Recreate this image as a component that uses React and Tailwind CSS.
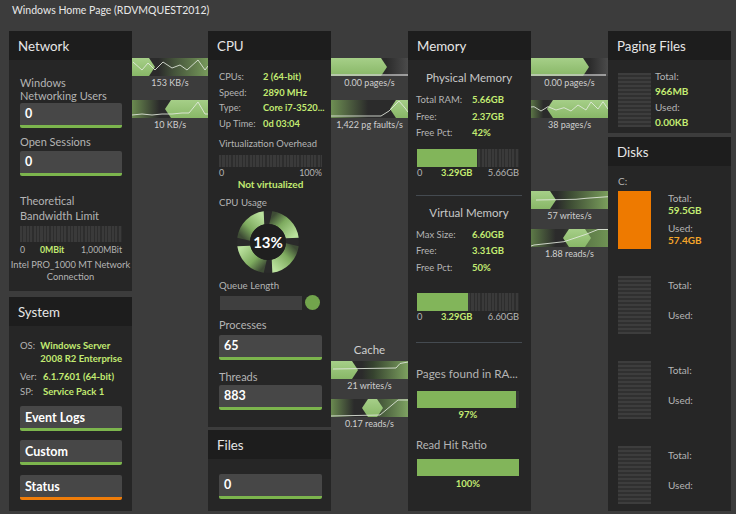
import React from "react";

const stripesV =
  "bg-[image:repeating-linear-gradient(90deg,#3a3a3a_0px,#3a3a3a_2.2px,#2d2d2d_2.2px,#2d2d2d_3.4px)]";
const stripesH =
  "bg-[image:repeating-linear-gradient(180deg,#3d3d3d_0px,#3d3d3d_2.5px,#303030_2.5px,#303030_4px)]";

function Panel({ title, className, children }) {
  return (
    <div className={"flex flex-col bg-[#262626] " + className}>
      <div className="h-[29px] shrink-0 bg-[#1d1d1d] flex items-center pl-[9px] pt-[3px] text-[13.3px] text-[#e6e6e6]">
        {title}
      </div>
      <div className="flex-1 flex flex-col">{children}</div>
    </div>
  );
}

function ValBox({ children, className = "", orange = false }) {
  return (
    <div
      className={
        "h-[25px] shrink-0 rounded-[2px] bg-[#474747] border-b-[3px] flex items-center pl-[5px] text-white font-bold text-[12.5px] " +
        (orange ? "border-[#ef7d0a] " : "border-[#7cb54d] ") +
        className
      }
    >
      {children}
    </div>
  );
}

function hexPts(x1, x2, h, tipL, tipR) {
  const t = 6;
  const m = h / 2;
  const p = [];
  p.push(tipL ? [x1 + t, 0] : [x1, 0]);
  p.push(tipR ? [x2 - t, 0] : [x2, 0]);
  if (tipR) p.push([x2, m]);
  p.push(tipR ? [x2 - t, h] : [x2, h]);
  p.push(tipL ? [x1 + t, h] : [x1, h]);
  if (tipL) p.push([x1, m]);
  return p.map((q) => q.join(",")).join(" ");
}

function Flow({ id, w, h = 18, stops, hex, spark, sparkColor = "#e4eadf", sparkW = 1 }) {
  return (
    <svg width={w} height={h} className="block">
      <defs>
        <linearGradient id={id + "b"} x1="0" x2="1" y1="0" y2="0">
          {stops.map(([o, c], i) => (
            <stop key={i} offset={o} stopColor={c} />
          ))}
        </linearGradient>
        <linearGradient id={id + "h"} x1="0" x2="0" y1="0" y2="1">
          <stop offset="0" stopColor="#a6cf88" />
          <stop offset="1" stopColor="#88b767" />
        </linearGradient>
      </defs>
      <rect width={w} height={h} fill={`url(#${id}b)`} />
      <polygon points={hexPts(hex[0], hex[1], h, hex[2], hex[3])} fill={`url(#${id}h)`} />
      <polyline points={spark} fill="none" stroke={sparkColor} strokeWidth={sparkW} opacity="0.85" />
    </svg>
  );
}

function FlowLabel({ children }) {
  return <div className="text-center text-[9px] leading-[14px] text-[#cfcfcf] whitespace-nowrap">{children}</div>;
}

function Donut() {
  const c = 31;
  const R = 31;
  const r = 18;
  const segs = [
    [8, 82],
    [98, 172],
    [188, 262],
    [278, 352],
  ];
  const pt = (a, rad) => [c + rad * Math.sin((a * Math.PI) / 180), c - rad * Math.cos((a * Math.PI) / 180)];
  return (
    <svg width="62" height="62" className="block">
      <defs>
        {segs.map(([a, b], i) => {
          const s = pt(a, 24.5);
          const e = pt(b, 24.5);
          return (
            <linearGradient key={i} id={"dg" + i} gradientUnits="userSpaceOnUse" x1={s[0]} y1={s[1]} x2={e[0]} y2={e[1]}>
              <stop offset="0" stopColor="#3e4c35" />
              <stop offset="0.4" stopColor="#7eab5f" />
              <stop offset="1" stopColor="#bbe29e" />
            </linearGradient>
          );
        })}
      </defs>
      <circle cx={c} cy={c} r={R} fill="#2a2a2a" />
      {segs.map(([a, b], i) => {
        const o1 = pt(a, R);
        const o2 = pt(b, R);
        const i2 = pt(b - 4, r);
        const i1 = pt(a - 4, r);
        const d = `M${o1[0]},${o1[1]} A${R},${R} 0 0 1 ${o2[0]},${o2[1]} L${i2[0]},${i2[1]} A${r},${r} 0 0 0 ${i1[0]},${i1[1]} Z`;
        return <path key={i} d={d} fill={`url(#dg${i})`} />;
      })}
      <circle cx={c} cy={c} r={r} fill="#1f1f1f" />
      <text x={c} y={c + 5.5} textAnchor="middle" fill="#ffffff" fontSize="15" fontWeight="700" fontFamily="Lato, 'Open Sans', sans-serif">
        13%
      </text>
    </svg>
  );
}

const G = "text-[#c3eb72] font-bold whitespace-nowrap";

function DiskUnit({ name, total, used, filled, className = "" }) {
  return (
    <div className={"flex flex-col " + className}>
      <div className="h-[12px] leading-[12px] text-[10px] pl-[10px] text-[#b4b4b4]">{name}</div>
      <div className="flex mt-[4px]">
        <div className={"ml-[10px] w-[33px] h-[58px] " + (filled ? "bg-[#ee7a00] h-[56px]" : stripesH)} />
        {filled ? (
          <div className="ml-[17px] text-[10px] leading-[12px] flex flex-col">
            <div className="mt-[1px]">Total:</div>
            <div className={G}>{total}</div>
            <div className="mt-[6px]">Used:</div>
            <div className="text-[#f4a52a] font-bold">{used}</div>
          </div>
        ) : (
          <div className="ml-[17px] text-[10px] leading-[12px] flex flex-col">
            <div className="mt-[3px]">Total:</div>
            <div className="mt-[18px]">Used:</div>
          </div>
        )}
      </div>
    </div>
  );
}

export default function App() {
  return (
    <div className="w-[736px] h-[514px] overflow-hidden bg-[#3c3c3c] font-['Lato','Open_Sans',sans-serif] text-[#b4b4b4]">
      <div className="h-[31px] pl-[12px] pt-[2px] text-[10.5px] leading-[16px] text-[#e8e8e8]">
        Windows Home Page (RDVMQUEST2012)
      </div>
      <div className="flex pl-[9px] h-[480px]">
        {/* Column 1 */}
        <div className="w-[123px] flex flex-col shrink-0">
          <Panel title="Network" className="h-[260px]">
            <div className="pt-[16px] pl-[11px] pr-[10px] flex flex-col">
              <div className="text-[11px] leading-[13px] whitespace-nowrap">
                Windows
                <br />
                Networking Users
              </div>
              <ValBox className="mt-[1px]">0</ValBox>
              <div className="mt-[7px] text-[11px] leading-[13px]">Open Sessions</div>
              <ValBox className="mt-[3px]">0</ValBox>
              <div className="mt-[17px] text-[11px] leading-[15px]">
                Theoretical
                <br />
                Bandwidth Limit
              </div>
              <div className={"mt-[3px] h-[16px] " + stripesV} />
              <div className="mt-[2px] flex text-[8.7px] leading-[12px]">
                <div className="w-[20px]">0</div>
                <div className={"flex-1 " + G}>0MBit</div>
                <div>1,000MBit</div>
              </div>
              <div className="mt-[3px] -ml-[11px] -mr-[10px] text-center text-[9.3px] leading-[12px] whitespace-nowrap">
                Intel PRO_1000 MT Network
                <br />
                Connection
              </div>
            </div>
          </Panel>
          <Panel title="System" className="mt-[6px] flex-1">
            <div className="pt-[13px] pl-[11px] pr-[10px] flex flex-col text-[9.5px] leading-[13px]">
              <div className="flex">
                <div className="w-[23px]">OS:</div>
                <div className={G}>
                  Windows Server
                  <br />
                  2008 R2 Enterprise
                </div>
              </div>
              <div className="flex mt-[5px]">
                <div className="w-[23px]">Ver:</div>
                <div className={G}>6.1.7601 (64-bit)</div>
              </div>
              <div className="flex mt-[2px]">
                <div className="w-[23px]">SP:</div>
                <div className={G}>Service Pack 1</div>
              </div>
              <ValBox className="mt-[8px]">Event Logs</ValBox>
              <ValBox className="mt-[9px]">Custom</ValBox>
              <ValBox className="mt-[10px]" orange>
                Status
              </ValBox>
            </div>
          </Panel>
        </div>

        {/* Gap 1 */}
        <div className="w-[76px] shrink-0 flex flex-col pt-[27px]">
          <Flow
            id="f1"
            w={76}
            stops={[
              [0, "#2b2b2b"],
              [0.35, "#2b2b2b"],
              [0.55, "#44523a"],
              [1, "#779a5b"],
            ]}
            hex={[0, 23, false, true]}
            spark="1,4 10,12 16,5 23,12 31,4 40,10 48,7 55,12 66,2 73,12 76,8"
          />
          <FlowLabel>153 KB/s</FlowLabel>
          <div className="mt-[10px]">
            <Flow
              id="f2"
              w={76}
              stops={[
                [0, "#6b8b50"],
                [0.36, "#2b2b2b"],
                [0.5, "#2b2b2b"],
                [1, "#2b2b2b"],
              ]}
              hex={[33, 76, true, false]}
              spark="0,15 10,14 20,15 30,14 40,14 50,13 57,13 66,2 73,14 76,14"
            />
          </div>
          <FlowLabel>10 KB/s</FlowLabel>
        </div>

        {/* Column 2 */}
        <div className="w-[123px] flex flex-col shrink-0">
          <Panel title="CPU" className="h-[396px]">
            <div className="pt-[9px] pl-[11px] pr-[9px] flex flex-col">
              <div className="text-[9.3px] leading-[15.5px]">
                {[
                  ["CPUs:", "2 (64-bit)"],
                  ["Speed:", "2890 MHz"],
                  ["Type:", "Core i7-3520..."],
                  ["Up Time:", "0d 03:04"],
                ].map(([l, v]) => (
                  <div key={l} className="flex">
                    <div className="w-[44px] shrink-0">{l}</div>
                    <div className={G}>{v}</div>
                  </div>
                ))}
              </div>
              <div className="mt-[6px] text-[9.4px] leading-[14px] whitespace-nowrap">Virtualization Overhead</div>
              <div className={"mt-[4px] h-[12px] w-[103px] " + stripesV} />
              <div className="flex justify-between w-[103px] text-[9px] leading-[11px]">
                <span>0</span>
                <span>100%</span>
              </div>
              <div className={"w-[103px] text-center text-[10px] leading-[12px] " + G}>Not virtualized</div>
              <div className="mt-[5px] text-[9.7px] leading-[14px]">CPU Usage</div>
              <div className="mt-[2px] ml-[18px]">
                <Donut />
              </div>
              <div className="mt-[5px] text-[9.7px] leading-[14px]">Queue Length</div>
              <div className="mt-[3px] h-[15px] flex items-center">
                <div className="ml-[1px] w-[82px] h-[14px] bg-[#3f3f3f]" />
                <div className="ml-[3px] w-[15px] h-[15px] rounded-full bg-[#72a44c]" />
              </div>
              <div className="mt-[6px] text-[11px] leading-[17px]">Processes</div>
              <ValBox className="mt-[2px]">65</ValBox>
              <div className="mt-[8px] text-[11px] leading-[17px]">Threads</div>
              <ValBox>883</ValBox>
            </div>
          </Panel>
          <Panel title="Files" className="mt-[3px] flex-1">
            <div className="pt-[15px] pl-[11px] pr-[9px] flex flex-col">
              <ValBox>0</ValBox>
            </div>
          </Panel>
        </div>

        {/* Gap 2 */}
        <div className="w-[77px] shrink-0 flex flex-col pt-[27px]">
          <Flow
            id="f3"
            w={77}
            stops={[
              [0, "#2b2b2b"],
              [0.72, "#2b2b2b"],
              [1, "#4b4b4b"],
            ]}
            hex={[0, 56, false, true]}
            spark="0,17 77,17"
            sparkColor="#cfcfcf"
            sparkW={1.5}
          />
          <FlowLabel>0.00 pages/s</FlowLabel>
          <div className="mt-[10px]">
            <Flow
              id="f4"
              w={77}
              stops={[
                [0, "#6e8f53"],
                [0.48, "#2b2b2b"],
                [1, "#2b2b2b"],
              ]}
              hex={[59, 77, true, false]}
              spark="0,16 50,16 58,11 68,1 74,8 77,12"
            />
          </div>
          <FlowLabel>1,422 pg faults/s</FlowLabel>
          <div className="mt-[210px] text-center text-[11.5px] leading-[16px] text-[#cfcfcf]">Cache</div>
          <div className="mt-[3px]">
            <Flow
              id="f9"
              w={77}
              stops={[
                [0, "#2b2b2b"],
                [0.4, "#2b2b2b"],
                [0.55, "#36432f"],
                [1, "#7ca05f"],
              ]}
              hex={[0, 27, false, true]}
              spark="2,8 65,7 69,2.5 77,1"
            />
          </div>
          <FlowLabel>21 writes/s</FlowLabel>
          <div className="mt-[6px]">
            <Flow
              id="f10"
              w={77}
              stops={[
                [0, "#6a8a50"],
                [0.3, "#2b2b2b"],
                [0.42, "#2b2b2b"],
                [0.7, "#4e6440"],
                [1, "#7ea262"],
              ]}
              hex={[31, 52, true, true]}
              spark="0,17 49,16 67,1 77,1"
            />
          </div>
          <FlowLabel>0.17 reads/s</FlowLabel>
        </div>

        {/* Column 3 */}
        <div className="w-[123px] flex flex-col shrink-0">
          <Panel title="Memory" className="h-[480px]">
            <div className="pt-[10px] pl-[8px] pr-[9px] flex flex-col">
              <div className="text-center text-[11.5px] leading-[16px] text-[#c8c8c8]">Physical Memory</div>
              <div className="mt-[6px] text-[9.5px] leading-[16.5px]">
                {[
                  ["Total RAM:", "5.66GB"],
                  ["Free:", "2.37GB"],
                  ["Free Pct:", "42%"],
                ].map(([l, v]) => (
                  <div key={l} className="flex">
                    <div className="w-[56px]">{l}</div>
                    <div className={G}>{v}</div>
                  </div>
                ))}
              </div>
              <div className={"mt-[7px] ml-[1px] w-[102px] h-[18px] flex " + stripesV}>
                <div className="w-[60px] h-full bg-[#82b55a]" />
              </div>
              <div className="ml-[1px] w-[102px] flex text-[9.3px] leading-[12px]">
                <div className="w-[24px]">0</div>
                <div className={"flex-1 " + G}>3.29GB</div>
                <div>5.66GB</div>
              </div>
              <div className="mt-[16px] h-[1px] w-[106px] bg-[#444a50]" />
              <div className="mt-[9px] text-center text-[11.5px] leading-[16px] text-[#c8c8c8]">Virtual Memory</div>
              <div className="mt-[6px] text-[9.5px] leading-[16.5px]">
                {[
                  ["Max Size:", "6.60GB"],
                  ["Free:", "3.31GB"],
                  ["Free Pct:", "50%"],
                ].map(([l, v]) => (
                  <div key={l} className="flex">
                    <div className="w-[56px]">{l}</div>
                    <div className={G}>{v}</div>
                  </div>
                ))}
              </div>
              <div className={"mt-[17px] ml-[1px] w-[102px] h-[18px] flex " + stripesV}>
                <div className="w-[51px] h-full bg-[#82b55a]" />
              </div>
              <div className="ml-[1px] w-[102px] flex text-[9.3px] leading-[12px]">
                <div className="w-[24px]">0</div>
                <div className={"flex-1 " + G}>3.29GB</div>
                <div>6.60GB</div>
              </div>
              <div className="mt-[19px] h-[1px] w-[106px] bg-[#444a50]" />
              <div className="mt-[22px] text-[11.7px] leading-[16px] whitespace-nowrap">Pages found in RA...</div>
              <div className="mt-[10px] ml-[1px] w-[102px] h-[17px] flex bg-[#333]">
                <div className="w-[99px] h-full bg-[#82b55a]" />
              </div>
              <div className={"mt-[1px] w-[104px] text-center text-[9.5px] leading-[12px] " + G}>97%</div>
              <div className="mt-[16px] text-[11.2px] leading-[16px]">Read Hit Ratio</div>
              <div className="mt-[6px] ml-[1px] w-[102px] h-[17px] bg-[#82b55a]" />
              <div className={"mt-[2px] w-[104px] text-center text-[9.5px] leading-[12px] " + G}>100%</div>
            </div>
          </Panel>
        </div>

        {/* Gap 3 */}
        <div className="w-[77px] shrink-0 flex flex-col pt-[27px]">
          <Flow
            id="f5"
            w={77}
            stops={[
              [0, "#2b2b2b"],
              [0.76, "#2b2b2b"],
              [1, "#4b4b4b"],
            ]}
            hex={[0, 58, false, true]}
            spark="0,17 75,17"
            sparkColor="#cfcfcf"
            sparkW={1.5}
          />
          <FlowLabel>0.00 pages/s</FlowLabel>
          <div className="mt-[10px]">
            <Flow
              id="f6"
              w={77}
              stops={[
                [0, "#5a7445"],
                [0.16, "#2b2b2b"],
                [0.22, "#2b2b2b"],
                [1, "#6c8e52"],
              ]}
              hex={[16, 77, true, false]}
              spark="0,7 3,6.7 10,11 17,6.7 25,10 33,7.7 40,11 47,5 55,10 60,2 67,9 72,1.7 77,9"
            />
          </div>
          <FlowLabel>38 pages/s</FlowLabel>
          <div className="mt-[59px]">
            <Flow
              id="f7"
              w={77}
              stops={[
                [0, "#2b2b2b"],
                [0.34, "#2b2b2b"],
                [0.5, "#3c4a33"],
                [1, "#7a9e5c"],
              ]}
              hex={[0, 25, false, true]}
              spark="5,9 45,8.3 55,7.3 77,5.7"
            />
          </div>
          <FlowLabel>57 writes/s</FlowLabel>
          <div className="mt-[6px]">
            <Flow
              id="f8"
              w={77}
              stops={[
                [0, "#5d7a47"],
                [0.32, "#2b2b2b"],
                [0.42, "#2b2b2b"],
                [0.75, "#5f7d49"],
                [1, "#6f9254"],
              ]}
              hex={[32, 60, true, true]}
              spark="0,17 3,16 33,12.7 55,5.3 67,0.5 77,0.5"
            />
          </div>
          <FlowLabel>1.88 reads/s</FlowLabel>
        </div>

        {/* Column 4 */}
        <div className="w-[123px] flex flex-col shrink-0">
          <Panel title="Paging Files" className="h-[102px]">
            <div className="flex">
              <div className={"mt-[13px] ml-[10px] w-[33px] h-[54px] " + stripesH} />
              <div className="mt-[9px] ml-[4px] text-[10px] leading-[15.4px] flex flex-col">
                <div>Total:</div>
                <div className={G}>966MB</div>
                <div>Used:</div>
                <div className={G}>0.00KB</div>
              </div>
            </div>
          </Panel>
          <Panel title="Disks" className="mt-[4px] flex-1">
            <div className="pt-[9px] flex flex-col">
              <DiskUnit name="C:" total="59.5GB" used="57.4GB" filled />
              <DiskUnit name="" className="mt-[11px]" />
              <DiskUnit name="" className="mt-[11px]" />
              <DiskUnit name="" className="mt-[11px]" />
            </div>
          </Panel>
        </div>
      </div>
    </div>
  );
}
